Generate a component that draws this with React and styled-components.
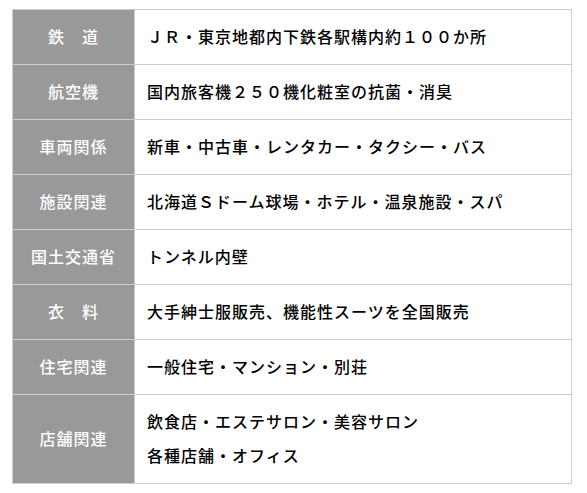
import React from "react";
import styled, { createGlobalStyle } from "styled-components";

const rows = [
  { label: "鉄　道", lines: ["ＪＲ・東京地都内下鉄各駅構内約１００か所"] },
  { label: "航空機", lines: ["国内旅客機２５０機化粧室の抗菌・消臭"] },
  { label: "車両関係", lines: ["新車・中古車・レンタカー・タクシー・バス"] },
  { label: "施設関連", lines: ["北海道Ｓドーム球場・ホテル・温泉施設・スパ"] },
  { label: "国土交通省", lines: ["トンネル内壁"] },
  { label: "衣　料", lines: ["大手紳士服販売、機能性スーツを全国販売"] },
  { label: "住宅関連", lines: ["一般住宅・マンション・別荘"] },
  {
    label: "店舗関連",
    lines: ["飲食店・エステサロン・美容サロン", "各種店舗・オフィス"],
  },
];

const GlobalStyle = createGlobalStyle`
  body {
    margin: 0;
    background: #fff;
    font-family: "Noto Sans CJK JP", "Noto Sans", sans-serif;
  }
`;

function App() {
  return (
    <>
      <GlobalStyle />
      <Wrapper>
        <Table>
          <tbody>
            {rows.map((row) => (
              <tr key={row.label}>
                <Head>{row.label}</Head>
                <Cell>
                  {row.lines.map((line) => (
                    <Line key={line}>{line}</Line>
                  ))}
                </Cell>
              </tr>
            ))}
          </tbody>
        </Table>
      </Wrapper>
    </>
  );
}

export default App;

const Wrapper = styled.div`
  padding: 9px 15px 0 12px;
`;

const Table = styled.table`
  width: 560px;
  border-collapse: collapse;
  table-layout: fixed;
`;

const Head = styled.th`
  width: 97px;
  padding: 9px 12px 11px;
  background: #999999;
  border: 1px solid #cccccc;
  color: #ffffff;
  font-size: 16px;
  font-weight: 500;
  letter-spacing: 1px;
  line-height: 34px;
  text-align: center;
  white-space: nowrap;
`;

const Cell = styled.td`
  padding: 9px 12px 11px;
  border: 1px solid #cccccc;
  color: #000000;
  font-size: 16px;
  font-weight: 500;
  letter-spacing: 1px;
  line-height: 34px;
  text-align: left;
`;

const Line = styled.div`
  white-space: nowrap;
`;
